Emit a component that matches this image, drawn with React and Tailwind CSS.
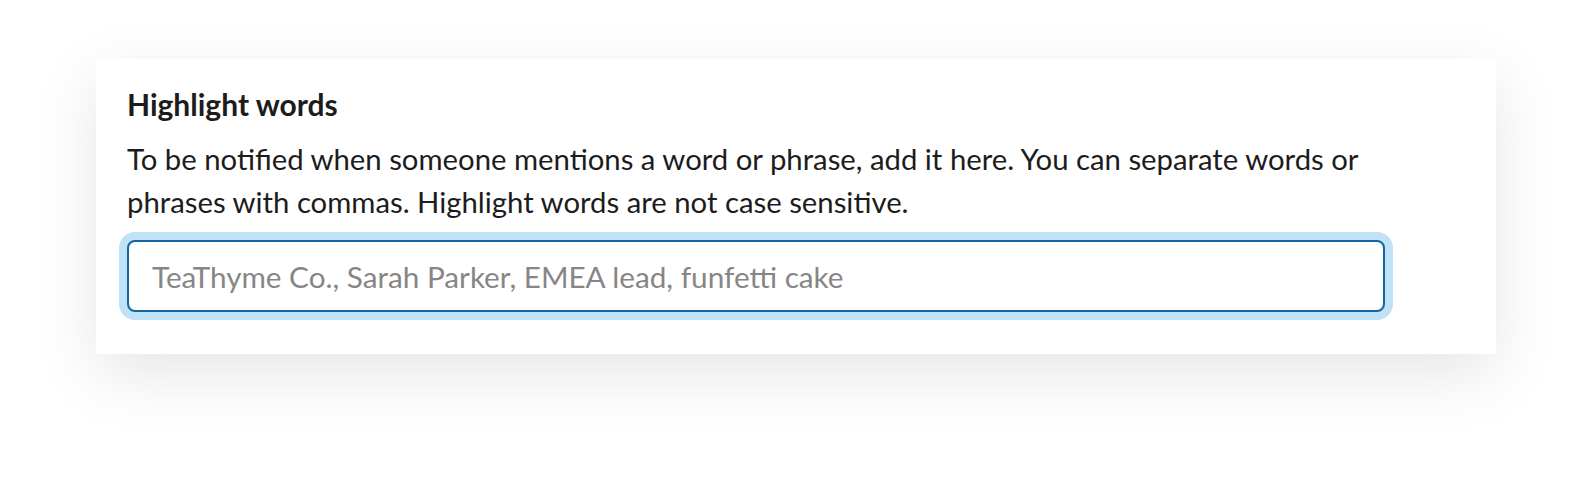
export default function App() {
  return (
    <div className="min-h-[486px] w-full bg-white pt-[59px] font-['Lato',sans-serif] text-[#1d1c1d]">
      <div className="mx-auto w-[1400px] bg-white px-[31px] pt-[27px] pb-[42px] shadow-[0_20px_60px_rgba(0,0,0,0.1)]">
        <h2 className="text-[30px] font-bold leading-[36px]">Highlight words</h2>
        <p className="mt-[15px] max-w-[1290px] text-[29.3px] leading-[43px]">
          To be notified when someone mentions a word or phrase, add it here. You can separate words or
          phrases with commas. Highlight words are not case sensitive.
        </p>
        <input
          type="text"
          placeholder="TeaThyme Co., Sarah Parker, EMEA lead, funfetti cake"
          className="mt-[17px] block h-[72px] w-[1258px] rounded-[8px] border-2 border-[#1264a3] bg-white px-[23px] text-[29.7px] text-[#1d1c1d] shadow-[0_0_0_8px_#bfe2f6] outline-none placeholder:text-[#868686]"
        />
      </div>
    </div>
  )
}
